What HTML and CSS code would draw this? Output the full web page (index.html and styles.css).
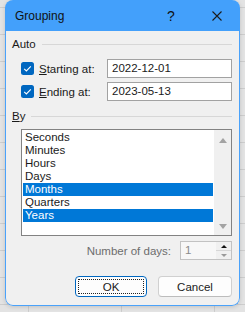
FILE: index.html
```html
<!DOCTYPE html>
<html lang="en">
<head>
    <meta charset="UTF-8">
    <meta name="viewport" content="width=device-width, initial-scale=1.0">
    <title>Grouping</title>
    <link rel="stylesheet" href="styles.css">
</head>
<body>
    <div class="dialog">
        <div class="titlebar">
            <span class="title">Grouping</span>
            <span class="caption-btn">?</span>
            <span class="caption-btn">
                <svg width="10" height="10" viewBox="0 0 10 10"><path d="M0.5 0.5L9.5 9.5M9.5 0.5L0.5 9.5" stroke="#1b1b1b" stroke-width="1.1" fill="none"/></svg>
            </span>
        </div>
        <div class="content">
            <div class="group-head"><span>Auto</span></div>

            <div class="row first">
                <span class="check">
                    <svg width="13" height="13" viewBox="0 0 13 13"><rect x="0" y="0" width="13" height="13" rx="2.5" fill="#0067c0"/><path d="M3.2 6.8L5.4 9L9.8 4.3" stroke="#ffffff" stroke-width="1.1" fill="none"/></svg>
                </span>
                <span class="row-label"><u>S</u>tarting at:</span>
                <div class="text-box">2022-12-01</div>
            </div>
            <div class="row">
                <span class="check">
                    <svg width="13" height="13" viewBox="0 0 13 13"><rect x="0" y="0" width="13" height="13" rx="2.5" fill="#0067c0"/><path d="M3.2 6.8L5.4 9L9.8 4.3" stroke="#ffffff" stroke-width="1.1" fill="none"/></svg>
                </span>
                <span class="row-label"><u>E</u>nding at:</span>
                <div class="text-box">2023-05-13</div>
            </div>

            <div class="group-head by"><span><u>B</u>y</span></div>

            <div class="listbox">
                <div class="items">
                    <div class="item">Seconds</div>
                    <div class="item">Minutes</div>
                    <div class="item">Hours</div>
                    <div class="item">Days</div>
                    <div class="item selected">Months</div>
                    <div class="item">Quarters</div>
                    <div class="item selected">Years</div>
                </div>
                <div class="scrollbar">
                    <span class="arrow-up"></span>
                    <span class="arrow-down"></span>
                </div>
            </div>

            <div class="days-row">
                <span class="days-label">Number of days:</span>
                <div class="spin">
                    <span class="spin-value">1</span>
                    <div class="spin-btns">
                        <div class="spin-half"><span class="spin-up"></span></div>
                        <div class="spin-half"><span class="spin-down"></span></div>
                    </div>
                </div>
            </div>

            <div class="buttons">
                <div class="btn ok"><span class="focus">OK</span></div>
                <div class="btn cancel">Cancel</div>
            </div>
        </div>
    </div>
</body>
</html>
```

FILE: styles.css
```css
body {
    margin: 0;
    width: 245px;
    height: 312px;
    overflow: hidden;
    font-family: "Liberation Sans", Arial, sans-serif;
    font-size: 11.5px;
    color: #1a1a1a;
    background-color: #e3e3e3;
    background-image:
        repeating-linear-gradient(180deg, transparent 0, transparent 7px, #cdcdcd 7px, #cdcdcd 8px, transparent 8px, transparent 27px),
        repeating-linear-gradient(90deg, transparent 0, transparent 28px, #cdcdcd 28px, #cdcdcd 29px, transparent 29px, transparent 93px);
}
.dialog {
    margin-left: 5px;
    width: 235px;
    height: 306px;
    display: flex;
    flex-direction: column;
    border-radius: 8px;
    overflow: hidden;
    box-shadow: 0 1px 4px rgba(0, 0, 0, 0.15);
}
.titlebar {
    height: 31px;
    flex: none;
    display: flex;
    align-items: center;
    background-color: #43a0fb;
    padding-left: 10px;
}
.title {
    flex: 1;
    font-size: 12px;
    color: #111;
}
.caption-btn {
    width: 46px;
    height: 31px;
    display: flex;
    align-items: center;
    justify-content: center;
    font-size: 14px;
    color: #111;
}
.content {
    flex: 1;
    background-color: #f0f0f0;
    border: 1px solid #4aa2fa;
    border-top: none;
    border-radius: 0 0 8px 8px;
    padding: 0 7px 0 6px;
}
.group-head {
    display: flex;
    align-items: center;
    height: 16px;
    margin-top: 5px;
    gap: 6px;
}
.group-head::after {
    content: "";
    flex: 1;
    height: 1px;
    background-color: #d7d7d7;
}
.group-head.by {
    margin-top: 7px;
}
.row {
    display: flex;
    align-items: center;
    height: 19px;
    padding-left: 9px;
    margin-top: 4px;
}
.row.first {
    margin-top: 7px;
}
.check {
    width: 13px;
    height: 13px;
    display: flex;
}
.row-label {
    flex: 1;
    margin-left: 5px;
}
.text-box {
    width: 125px;
    height: 19px;
    box-sizing: border-box;
    border: 1px solid #a2a2a2;
    background: white;
    padding-left: 4px;
    line-height: 17px;
}
.listbox {
    margin: 5px 0 0 9px;
    height: 107px;
    box-sizing: border-box;
    border: 1px solid #828282;
    background: white;
    display: flex;
}
.items {
    flex: 1;
    padding: 1px;
}
.item {
    height: 13px;
    line-height: 13px;
    padding-left: 2px;
}
.item.selected {
    background-color: #0078d7;
    color: white;
}
.scrollbar {
    width: 17px;
    background-color: #f0f0f0;
    display: flex;
    flex-direction: column;
    align-items: center;
    justify-content: space-between;
    padding: 8px 0 6px;
    box-sizing: border-box;
}
.arrow-up {
    width: 0;
    height: 0;
    border-left: 4px solid transparent;
    border-right: 4px solid transparent;
    border-bottom: 5px solid #a3a3a3;
}
.arrow-down {
    width: 0;
    height: 0;
    border-left: 4px solid transparent;
    border-right: 4px solid transparent;
    border-top: 5px solid #a3a3a3;
}
.days-row {
    display: flex;
    align-items: center;
    justify-content: flex-end;
    height: 19px;
    margin-top: 5px;
}
.days-label {
    color: #6d6d6d;
    margin-right: 9px;
}
.spin {
    width: 52px;
    height: 19px;
    box-sizing: border-box;
    border: 1px solid #c2c2c2;
    background-color: #f7f7f7;
    display: flex;
}
.spin-value {
    flex: 1;
    padding-left: 4px;
    line-height: 17px;
    color: #8a8a8a;
}
.spin-btns {
    width: 15px;
    display: flex;
    flex-direction: column;
}
.spin-half {
    flex: 1;
    display: flex;
    align-items: center;
    justify-content: center;
    background-color: #f0f0f0;
}
.spin-half + .spin-half {
    border-top: 1px solid #d6d6d6;
}
.spin-up {
    width: 0;
    height: 0;
    border-left: 3px solid transparent;
    border-right: 3px solid transparent;
    border-bottom: 3px solid #111;
}
.spin-down {
    width: 0;
    height: 0;
    border-left: 3px solid transparent;
    border-right: 3px solid transparent;
    border-top: 3px solid #9a9a9a;
}
.buttons {
    display: flex;
    justify-content: flex-end;
    gap: 11px;
    margin-top: 16px;
}
.btn {
    height: 21px;
    box-sizing: border-box;
    border-radius: 4px;
    background-color: #fdfdfd;
    display: flex;
    align-items: center;
    justify-content: center;
}
.ok {
    width: 72px;
    border: 1px solid #0067c0;
    padding: 2px;
}
.focus {
    flex: 1;
    align-self: stretch;
    border: 1px dotted #222;
    display: flex;
    align-items: center;
    justify-content: center;
}
.cancel {
    width: 74px;
    border: 1px solid #d0d0d0;
    border-bottom-color: #bcbcbc;
}
```
